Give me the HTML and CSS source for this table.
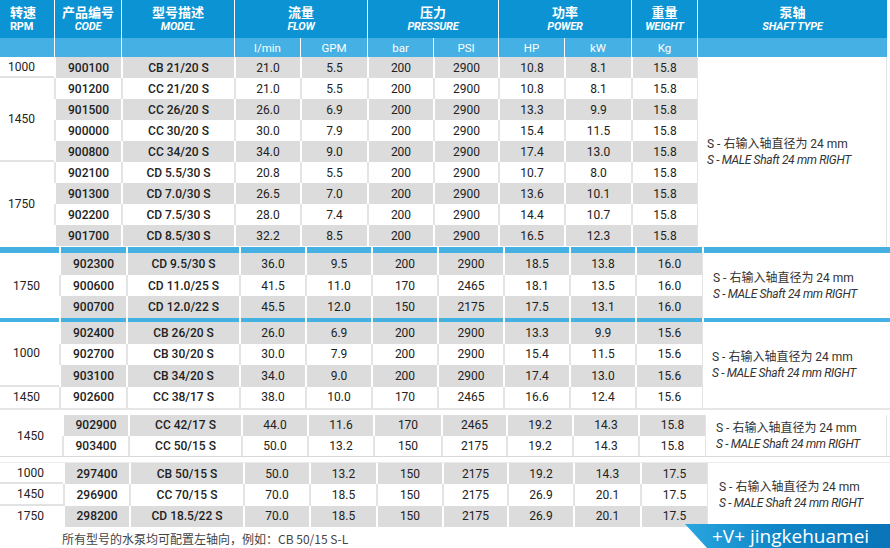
FILE: index.html
```html
<!DOCTYPE html>
<html lang="zh">
<head>
<meta charset="utf-8">
<title>泵参数表</title>
<link rel="stylesheet" href="styles.css">
</head>
<body>
<div class="page">
  <div class="grid head s1">
    <div class="hc first"><span class="zh">转速</span><span class="en up">RPM</span></div>
    <div class="hc"><span class="zh">产品编号</span><span class="en">CODE</span></div>
    <div class="hc"><span class="zh">型号描述</span><span class="en">MODEL</span></div>
    <div class="hc c2"><span class="zh">流量</span><span class="en">FLOW</span></div>
    <div class="hc c2"><span class="zh">压力</span><span class="en">PRESSURE</span></div>
    <div class="hc c2"><span class="zh">功率</span><span class="en">POWER</span></div>
    <div class="hc"><span class="zh">重量</span><span class="en">WEIGHT</span></div>
    <div class="hc"><span class="zh">泵轴</span><span class="en">SHAFT TYPE</span></div>
    <div class="hu first"></div><div class="hu"></div><div class="hu"></div>
    <div class="hu">l/min</div><div class="hu">GPM</div><div class="hu">bar</div><div class="hu">PSI</div>
    <div class="hu">HP</div><div class="hu">kW</div><div class="hu">Kg</div><div class="hu"></div>
  </div>

  <div class="grid seg s1">
    <div class="row g"><div class="rpm sep">1000</div><div class="v b">900100</div><div class="v b">CB 21/20 S</div><div class="v">21.0</div><div class="v">5.5</div><div class="v">200</div><div class="v">2900</div><div class="v">10.8</div><div class="v">8.1</div><div class="v">15.8</div>
      <div class="sh r9 boxed"><span>S - 右输入轴直径为 24 mm</span><span class="it">S - MALE Shaft 24 mm RIGHT</span></div></div>
    <div class="row"><div class="rpm sep r4">1450</div><div class="v b">901200</div><div class="v b">CC 21/20 S</div><div class="v">21.0</div><div class="v">5.5</div><div class="v">200</div><div class="v">2900</div><div class="v">10.8</div><div class="v">8.1</div><div class="v">15.8</div></div>
    <div class="row g"><div class="v b">901500</div><div class="v b">CC 26/20 S</div><div class="v">26.0</div><div class="v">6.9</div><div class="v">200</div><div class="v">2900</div><div class="v">13.3</div><div class="v">9.9</div><div class="v">15.8</div></div>
    <div class="row"><div class="v b">900000</div><div class="v b">CC 30/20 S</div><div class="v">30.0</div><div class="v">7.9</div><div class="v">200</div><div class="v">2900</div><div class="v">15.4</div><div class="v">11.5</div><div class="v">15.8</div></div>
    <div class="row g"><div class="v b">900800</div><div class="v b">CC 34/20 S</div><div class="v">34.0</div><div class="v">9.0</div><div class="v">200</div><div class="v">2900</div><div class="v">17.4</div><div class="v">13.0</div><div class="v">15.8</div></div>
    <div class="row"><div class="rpm r4">1750</div><div class="v b">902100</div><div class="v b">CD 5.5/30 S</div><div class="v">20.8</div><div class="v">5.5</div><div class="v">200</div><div class="v">2900</div><div class="v">10.7</div><div class="v">8.0</div><div class="v">15.8</div></div>
    <div class="row g"><div class="v b">901300</div><div class="v b">CD 7.0/30 S</div><div class="v">26.5</div><div class="v">7.0</div><div class="v">200</div><div class="v">2900</div><div class="v">13.6</div><div class="v">10.1</div><div class="v">15.8</div></div>
    <div class="row"><div class="v b">902200</div><div class="v b">CD 7.5/30 S</div><div class="v">28.0</div><div class="v">7.4</div><div class="v">200</div><div class="v">2900</div><div class="v">14.4</div><div class="v">10.7</div><div class="v">15.8</div></div>
    <div class="row g"><div class="v b">901700</div><div class="v b">CD 8.5/30 S</div><div class="v">32.2</div><div class="v">8.5</div><div class="v">200</div><div class="v">2900</div><div class="v">16.5</div><div class="v">12.3</div><div class="v">15.8</div></div>
  </div>

  <div class="grid strip st6 s2">
    <div></div><div></div><div></div><div></div><div></div><div></div><div></div><div></div><div></div><div></div><div></div>
  </div>
  <div class="grid seg s2 rows2">
    <div class="row g"><div class="rpm p13 r3">1750</div><div class="v b">902300</div><div class="v b">CD 9.5/30 S</div><div class="v">36.0</div><div class="v">9.5</div><div class="v">200</div><div class="v">2900</div><div class="v">18.5</div><div class="v">13.8</div><div class="v">16.0</div>
      <div class="sh r3 p10"><span>S - 右输入轴直径为 24 mm</span><span class="it">S - MALE Shaft 24 mm RIGHT</span></div></div>
    <div class="row"><div class="v b">900600</div><div class="v b">CD 11.0/25 S</div><div class="v">41.5</div><div class="v">11.0</div><div class="v">170</div><div class="v">2465</div><div class="v">18.1</div><div class="v">13.5</div><div class="v">16.0</div></div>
    <div class="row g"><div class="v b">900700</div><div class="v b">CD 12.0/22 S</div><div class="v">45.5</div><div class="v">12.0</div><div class="v">150</div><div class="v">2175</div><div class="v">17.5</div><div class="v">13.1</div><div class="v">16.0</div></div>
  </div>

  <div class="grid strip st4 s2">
    <div></div><div></div><div></div><div></div><div></div><div></div><div></div><div></div><div></div><div></div><div></div>
  </div>
  <div class="grid seg s2 rows3">
    <div class="row g"><div class="rpm p13 sep r3">1000</div><div class="v b">902400</div><div class="v b">CB 26/20 S</div><div class="v">26.0</div><div class="v">6.9</div><div class="v">200</div><div class="v">2900</div><div class="v">13.3</div><div class="v">9.9</div><div class="v">15.6</div>
      <div class="sh r4 p9"><span>S - 右输入轴直径为 24 mm</span><span class="it">S - MALE Shaft 24 mm RIGHT</span></div></div>
    <div class="row"><div class="v b">902700</div><div class="v b">CB 30/20 S</div><div class="v">30.0</div><div class="v">7.9</div><div class="v">200</div><div class="v">2900</div><div class="v">15.4</div><div class="v">11.5</div><div class="v">15.6</div></div>
    <div class="row g"><div class="v b">903100</div><div class="v b">CB 34/20 S</div><div class="v">34.0</div><div class="v">9.0</div><div class="v">200</div><div class="v">2900</div><div class="v">17.4</div><div class="v">13.0</div><div class="v">15.6</div></div>
    <div class="row"><div class="rpm p13">1450</div><div class="v b">902600</div><div class="v b">CC 38/17 S</div><div class="v">38.0</div><div class="v">10.0</div><div class="v">170</div><div class="v">2465</div><div class="v">16.6</div><div class="v">12.4</div><div class="v">15.6</div></div>
  </div>

  <div class="gap"></div>

  <div class="grid seg s4 rows4">
    <div class="row g"><div class="rpm p17 r2">1450</div><div class="v b">902900</div><div class="v b">CC 42/17 S</div><div class="v">44.0</div><div class="v">11.6</div><div class="v">170</div><div class="v">2465</div><div class="v">19.2</div><div class="v">14.3</div><div class="v">15.8</div>
      <div class="sh r2 p10 boxed"><span>S - 右输入轴直径为 24 mm</span><span class="it">S - MALE Shaft 24 mm RIGHT</span></div></div>
    <div class="row"><div class="v b">903400</div><div class="v b">CC 50/15 S</div><div class="v">50.0</div><div class="v">13.2</div><div class="v">150</div><div class="v">2175</div><div class="v">19.2</div><div class="v">14.3</div><div class="v">15.8</div></div>
  </div>

  <div class="torn"></div>

  <div class="grid seg s5 rows5">
    <div class="row g"><div class="rpm p17 sep">1000</div><div class="v b">297400</div><div class="v b">CB 50/15 S</div><div class="v">50.0</div><div class="v">13.2</div><div class="v">150</div><div class="v">2175</div><div class="v">19.2</div><div class="v">14.3</div><div class="v">17.5</div>
      <div class="sh r3 p11"><span>S - 右输入轴直径为 24 mm</span><span class="it">S - MALE Shaft 24 mm RIGHT</span></div></div>
    <div class="row"><div class="rpm p17 sep">1450</div><div class="v b">296900</div><div class="v b">CC 70/15 S</div><div class="v">70.0</div><div class="v">18.5</div><div class="v">150</div><div class="v">2175</div><div class="v">26.9</div><div class="v">20.1</div><div class="v">17.5</div></div>
    <div class="row g"><div class="rpm p17">1750</div><div class="v b">298200</div><div class="v b">CD 18.5/22 S</div><div class="v">70.0</div><div class="v">18.5</div><div class="v">150</div><div class="v">2175</div><div class="v">26.9</div><div class="v">20.1</div><div class="v">17.5</div></div>
  </div>

  <div class="foot">所有型号的水泵均可配置左轴向，例如：CB 50/15 S-L</div>

  <div class="wm">+V+ jingkehuamei</div>
</div>
</body>
</html>
```

FILE: styles.css
```css
html, body {
  margin: 0;
  padding: 0;
  background: #fff;
}
.page {
  position: relative;
  width: 890px;
  height: 548px;
  overflow: hidden;
  font-family: Roboto, "Noto Sans CJK SC", sans-serif;
  color: #222;
}
.grid { display: grid; }
.row { display: contents; }

.s1 { grid-template-columns: 54px 67px 113px 66px 67px 66px 65px 66px 67px 66px 190px; width: 887px; }
.s2 { grid-template-columns: 59px 67px 113px 66px 66px 66px 66px 66px 66px 67px 188px; }
.s4 { grid-template-columns: 62px 66px 113px 66px 66px 68px 65px 66px 66px 67px 182px; width: 887px; }
.s5 { grid-template-columns: 63px 66px 114px 66px 67px 66px 65px 66px 67px 67px 183px; }

/* header */
.head { grid-template-rows: 38px 19px; }
.hc {
  background: #0c93d3;
  color: #fff;
  border-left: 1px solid #fff;
  display: flex;
  flex-direction: column;
  align-items: center;
  justify-content: center;
  line-height: 15px;
}
.hc.first { border-left: 0; align-items: flex-start; padding-left: 10px; }
.c2 { grid-column: span 2; }
.zh { font-size: 13px; font-weight: 700; font-family: "Noto Sans CJK SC", sans-serif; }
.en { font-size: 11px; font-weight: 700; font-style: italic; letter-spacing: -0.2px; }
.en.up { font-style: normal; }
.hu {
  background: #44b0e3;
  color: #fff;
  border-left: 1px solid #fff;
  font-size: 11.5px;
  display: flex;
  align-items: center;
  justify-content: center;
}
.hu.first { border-left: 0; }

/* data segments */
.seg { grid-auto-rows: 21px; }
.rows2 { grid-auto-rows: 22px 21px 22px; }
.rows3 { grid-auto-rows: 21.5px; }
.rows4 { grid-auto-rows: 20.5px; }
.rows5 { grid-auto-rows: 21.33px; }

.v {
  border-left: 2px solid #e4e4e4;
  font-size: 12px;
  display: flex;
  align-items: center;
  justify-content: center;
  box-sizing: border-box;
}
.g > .v { background: #dcdcdc; border-left-color: #fff; }
.v.b { font-weight: 500; }

.rpm {
  font-size: 12px;
  display: flex;
  align-items: center;
  padding-left: 8px;
  box-sizing: border-box;
}
.p13 { padding-left: 13px; }
.p17 { padding-left: 17px; }
.sep { border-bottom: 2px solid #e2e2e2; }

.r2 { grid-row: span 2; }
.r3 { grid-row: span 3; }
.r4 { grid-row: span 4; }
.r9 { grid-row: span 9; }

.sh {
  border-left: 1px solid #e4e4e4;
  display: flex;
  flex-direction: column;
  justify-content: center;
  padding-left: 9px;
  font-size: 12px;
  line-height: 16px;
  color: #333;
  box-sizing: border-box;
}
.sh.p10 { padding-left: 10px; }
.sh.p9 { padding-left: 9px; }
.sh.p11 { padding-left: 11px; }
.sh.boxed { border-right: 1px solid #e4e4e4; }
.sh .it { font-style: italic; letter-spacing: -0.35px; }

.s1.seg { margin-bottom: 1px; }

/* blue strips from the cut header */
.strip > div { background: #45b1e3; border-left: 2px solid #fff; }
.strip > div:first-child { border-left: 0; }
.st6 { height: 6px; }
.st4 { height: 4px; }

.gap {
  height: 7px;
  box-sizing: border-box;
  border-top: 2px solid #e6e6e6;
}
.torn {
  height: 7px;
  box-sizing: border-box;
  border-top: 1px solid #d9d9d9;
  border-bottom: 1px solid #ececec;
}

.foot {
  padding: 5px 0 0 62px;
  font-size: 12px;
  line-height: 14px;
  color: #444;
  font-family: "Noto Sans CJK SC", sans-serif;
}

.wm {
  position: absolute;
  right: 0;
  bottom: 0;
  width: 205px;
  height: 24px;
  box-sizing: border-box;
  padding-left: 27px;
  background: linear-gradient(90deg, #2aa6df 0%, #0e86c8 45%, #0a74b8 100%);
  clip-path: polygon(0 0, 100% 0, 100% 100%, 22px 100%);
  color: #fff;
  font-family: "Open Sans", sans-serif;
  font-size: 19px;
  line-height: 24px;
  white-space: nowrap;
}
```
